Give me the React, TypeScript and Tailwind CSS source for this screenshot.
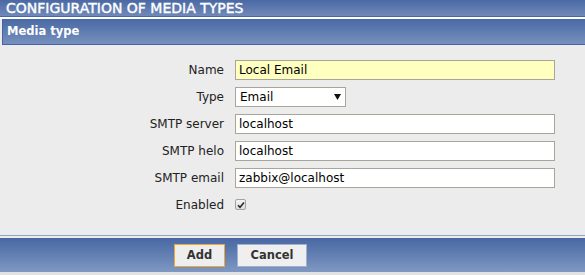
import React from "react";

const fields = [
  { label: "SMTP server", value: "localhost" },
  { label: "SMTP helo", value: "localhost" },
  { label: "SMTP email", value: "zabbix@localhost" },
];

function Row({ label, children }: { label: string; children: React.ReactNode }) {
  return (
    <div className="flex h-[27px] items-center">
      <div className="w-[224px] text-right text-[12px] text-[#222]">{label}</div>
      <div className="ml-[11px] flex items-center">{children}</div>
    </div>
  );
}

export default function App() {
  return (
    <div
      className="flex h-[275px] w-[585px] flex-col overflow-hidden bg-[#ececec]"
      style={{ fontFamily: '"DejaVu Sans", Verdana, sans-serif' }}
    >
      {/* page title */}
      <div className="flex h-[17px] items-center border-b border-[#4966a6] bg-gradient-to-b from-[#4a69a4] to-[#7089b8] pl-[6px] text-[14px] leading-none text-white [-webkit-text-stroke:0.4px_white]">
        CONFIGURATION OF MEDIA TYPES
      </div>
      <div className="h-[2px] bg-white" />

      {/* form header */}
      <div className="ml-[2px] flex h-[26px] items-center border-b border-l border-[#4563a6] bg-gradient-to-b from-[#4a69a4] to-[#7690bd] pl-[4px] text-[11.5px] font-bold text-white">
        Media type
      </div>

      <div className="flex flex-1 flex-col pt-[11px]">
        <Row label="Name">
          <div className="flex h-[20px] w-[320px] items-center border border-[#a8a698] bg-[#ffffc0] pl-[3px] text-[12px] text-black">
            Local Email
          </div>
        </Row>
        <Row label="Type">
          <div className="flex h-[20px] w-[111px] items-center justify-between border border-[#a8a698] bg-white px-[4px] text-[12px] text-black">
            <span>Email</span>
            <svg width="7" height="6" viewBox="0 0 7 6">
              <path d="M0 0h7L3.5 6z" fill="#111" />
            </svg>
          </div>
        </Row>
        {fields.map((f) => (
          <Row key={f.label} label={f.label}>
            <div className="flex h-[20px] w-[320px] items-center border border-[#a8a698] bg-white pl-[3px] text-[12px] text-black">
              {f.value}
            </div>
          </Row>
        ))}
        <Row label="Enabled">
          <span className="flex h-[11px] w-[11px] items-center justify-center rounded-[2px] border border-[#a3a3a3] bg-gradient-to-b from-[#f4f4f4] to-[#dcdcdc]">
            <svg width="8" height="8" viewBox="0 0 8 8">
              <path d="M1 4.2l2 2L7 1.5" stroke="#2a2a2a" strokeWidth="1.6" fill="none" />
            </svg>
          </span>
        </Row>
      </div>

      {/* footer */}
      <div className="h-px bg-[#8da2c4]" />
      <div className="h-[2px]" />
      <div className="flex h-[34px] items-center gap-[12px] border-t border-[#4a66a4] bg-gradient-to-b from-[#4a69a4] to-[#7f98c2] pl-[174px]">
        <button className="h-[23px] w-[51px] border border-[#f5a533] bg-[#eeeeee] text-[11.5px] font-bold text-[#333]">
          Add
        </button>
        <button className="h-[23px] w-[70px] border border-[#9fb1cf] bg-[#efefef] text-[11.5px] font-bold text-[#333]">
          Cancel
        </button>
      </div>
      <div className="h-[3px] bg-[#e2e2e2]" />
    </div>
  );
}
